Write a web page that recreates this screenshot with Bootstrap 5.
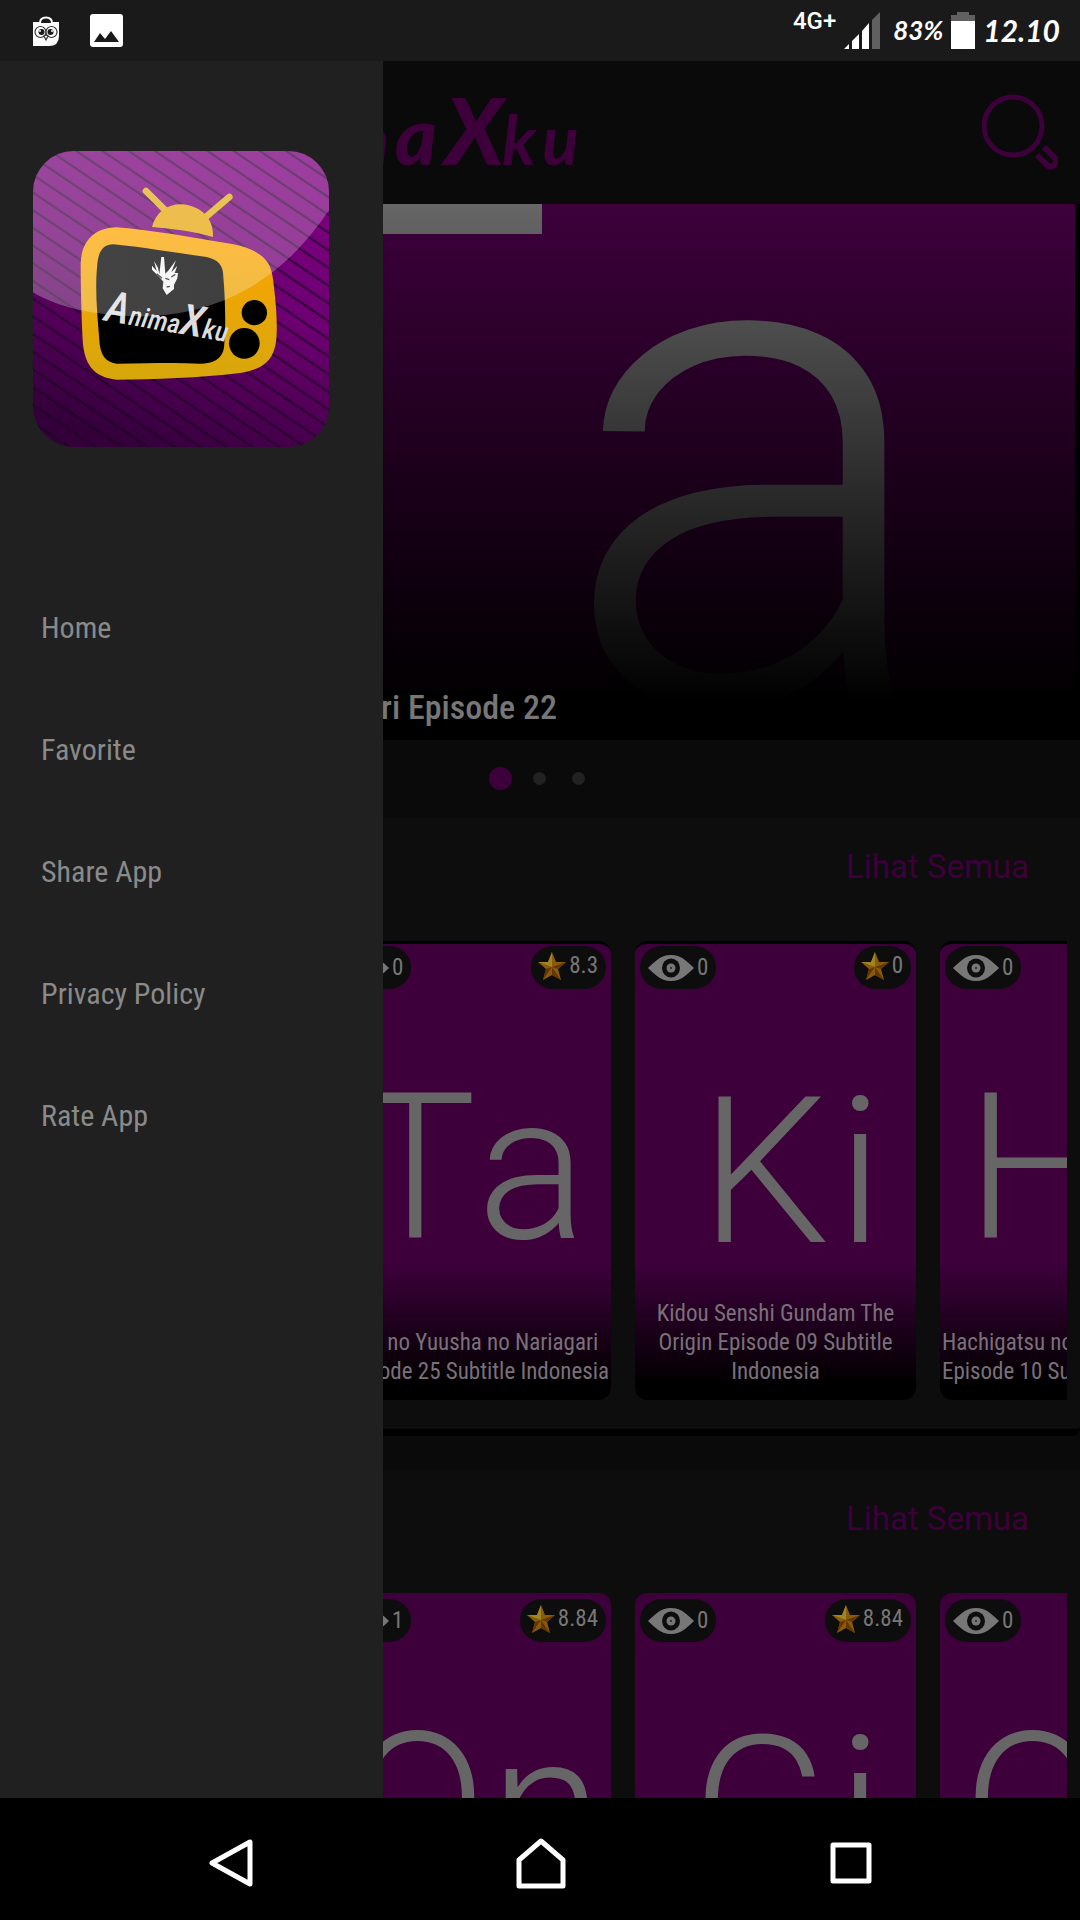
<!DOCTYPE html>
<html lang="id">
<head>
<meta charset="utf-8">
<meta name="viewport" content="width=device-width, initial-scale=1">
<title>AnimaXku</title>
<link href="https://cdn.jsdelivr.net/npm/bootstrap@5.3.0/dist/css/bootstrap.min.css" rel="stylesheet">
<style>
:root{--plum:#3d003b;--ink:#0a0a0a;--panel:#0d0d0d;--drawer:#202020;--narrow:"Roboto Condensed","Liberation Sans Narrow",Roboto,sans-serif}
body{background:var(--ink);font-family:Roboto,sans-serif;color:#666}
svg{display:block}
.status-bar{height:61px;background:#1a1a1a;color:#fff;padding:0 20px 0 33px}
.status-icons{gap:31px}
.net{font-size:24px;line-height:24px;font-weight:500;margin-bottom:20px}
.signal{margin-right:12px}
.hand{font-family:Lato,sans-serif;font-style:italic;font-weight:700}
.pct{font-size:26px}
.clock{font-size:30px}
.stage{min-height:0}
.drawer{width:383px;background:var(--drawer);padding:90px 33px 0;z-index:5}
.app-logo{width:296px;height:296px;margin-bottom:119px}
.drawer .nav-link{height:122px;padding:0 8px;font-family:var(--narrow);font-size:30px;color:#8a8a8a}
.top-bar{height:143px;padding-right:22px}
.wordmark{width:240px;height:143px;margin-left:340px}
.wordmark text{font-family:Lato,sans-serif;font-style:italic}
.app-logo text{font-family:var(--narrow);font-style:italic}
.hero{height:536px;background:#000}
.hero-art{width:1075px;height:536px}
.hero-caption{width:557px;bottom:11px;font-family:var(--narrow);font-size:34px;line-height:44px;font-weight:500;color:#777;text-align:right}
.dots{height:78px;padding:0 0 2px 489px;gap:26px}
.dots span{width:13px;height:13px;background:#222}
.dots .now{width:23px;height:23px;background:var(--plum)}
.dots span:nth-child(2){margin-left:-5px}
.shelf{background:var(--panel)}
.shelf-first{border-bottom:7px solid #000;border-bottom-right-radius:8px;margin-bottom:34px}
.shelf-head{height:123px;padding:0 51px 26px 0}
.shelf-head a{font-size:33px;color:var(--plum)}
.shelf-row{padding-left:330px;margin-right:13px;gap:24px;padding-bottom:29px}
.poster{flex:0 0 281px;height:459px;border-radius:12px;background:var(--plum);overflow:hidden}
.shelf-first .poster{border-top:3px solid #000}
.art text,.hero-art text{font-family:Roboto,sans-serif;font-weight:300;fill:#666}
.art{width:281px;height:459px}
.pill{height:43px;border-radius:22px;background:#0d0d0d;font-family:var(--narrow);font-size:23px;line-height:43px;color:#777}
.pills{top:6px;left:5px;right:5px}
.shelf-first .pills{top:2px}
.seen{padding:0 8px;gap:3px}
.rate{padding:0 8px 4px 7px;gap:3px}
.poster-title{height:137px;padding:0 2px 14px;font-family:var(--narrow);font-size:23px;line-height:29px;color:#7a707a;background:linear-gradient(rgba(0,0,0,0),#000 88%)}
.soft-keys{height:122px;background:#000;padding:8px 74px 0 76px}
.soft-keys .btn{border:0;flex:1}
</style>
</head>
<body class="vh-100 overflow-hidden d-flex flex-column">
<svg width="0" height="0" class="position-absolute" aria-hidden="true">
  <defs>
    <symbol id="eye" viewBox="0 0 46 26"><path d="M0 13Q4 9 9 5Q15 0 23 0T37 5Q42 9 46 13Q42 17 37 21Q31 26 23 26T9 21Q4 17 0 13Z" fill="#777"/><ellipse cx="23" cy="13" rx="9" ry="9.500" fill="#0d0d0d"/><circle cx="23" cy="13" r="4.500" fill="#777"/><circle cx="23" cy="13" r="1" fill="#222"/></symbol>
    <symbol id="star" viewBox="0 0 28 28"><path d="M14 0l4 10 10 0-8 7 3 11-9-5-9 5 3-11-8-7 10 0z" fill="#8a5c0a"/><path d="M28 10l-14 5 6 2zM23 28l-9-13v8zM5 28l9-13-6 2zM0 10l14 5-4-5z" fill="#643604"/><path d="M14 0l-4 10 4 5zM0 10h10l4 5z" fill="#a08522"/></symbol>
    <linearGradient id="fade" x2="0" y2="1"><stop offset="0" stop-opacity="0"/><stop offset=".5" stop-opacity=".55"/><stop offset=".93"/></linearGradient>
  </defs>
</svg>

<header class="status-bar d-flex align-items-center justify-content-between flex-shrink-0">
  <div class="d-flex align-items-center status-icons">
    <svg width="26" height="30" viewBox="0 0 26 30"><path d="M0 6H26V20Q26 30 16 30H0Z" fill="#fff"/><path d="M7 7Q7 1.500 13 1.500T19 7" fill="#1a1a1a" stroke="#fff" stroke-width="2"/><g fill="#fff" stroke="#333" stroke-width="1.200"><circle cx="7.500" cy="16" r="5.500"/><circle cx="18.500" cy="16" r="5.500"/><path d="M11 20l2-1 2 1-2 4z"/></g><circle cx="8.500" cy="16" r="3" fill="#1a1a1a"/><circle cx="17.500" cy="16" r="3" fill="#1a1a1a"/><circle cx="7" cy="15" r="1" fill="#fff"/><circle cx="19" cy="15" r="1" fill="#fff"/></svg>
    <svg width="33" height="33" viewBox="0 0 33 33"><rect width="33" height="33" rx="3" fill="#fff"/><path d="M4 28l6-9 5 6 6-8 8 11z" fill="#1a1a1a"/></svg>
  </div>
  <div class="d-flex align-items-center">
    <span class="net me-2">4G+</span>
    <svg class="signal" width="37" height="37" viewBox="0 0 37 37"><path d="M0 37l5-5v5zM8 37V29l7-7v15zM18 37V19l7-8v26z" fill="#fff"/><path d="M28 37V8l8-8v37z" fill="#606060"/></svg>
    <span class="hand pct me-2">83%</span>
    <svg class="me-2" width="24" height="37" viewBox="0 0 24 37"><path d="M0 9V3H6V0H18V3H24V9Z" fill="#606060"/><path d="M0 9H24V37H0Z" fill="#fff"/></svg>
    <span class="hand clock">12.10</span>
  </div>
</header>

<div class="stage position-relative flex-grow-1 overflow-hidden">
  <aside class="drawer position-absolute top-0 start-0 h-100">
    <svg class="app-logo" viewBox="39 32 888 888" role="img" aria-label="AnimaXku">
      <defs>
        <linearGradient id="bg" x1=".7" y1="0" x2=".35" y2="1"><stop offset="0" stop-color="#7d0080"/><stop offset=".45" stop-color="#6d0072"/><stop offset="1" stop-color="#33003a"/></linearGradient>
        <pattern id="lines" width="60" height="44" patternUnits="userSpaceOnUse" patternTransform="rotate(34)"><path d="M0 20H60" stroke="#1d0024" stroke-opacity=".75" stroke-width="6"/></pattern>
        <linearGradient id="tv" x2="0" y2="1"><stop offset="0" stop-color="#ffa500"/><stop offset="1" stop-color="#d6a70c"/></linearGradient>
        <linearGradient id="gloss" x2="1"><stop offset="0" stop-color="#fff" stop-opacity=".27"/><stop offset="1" stop-color="#fff" stop-opacity=".24"/></linearGradient>
        <clipPath id="tile"><rect x="39" y="32" width="888" height="888" rx="122"/></clipPath>
      </defs>
      <g clip-path="url(#tile)">
        <path d="M39 32H927V920H39Z" fill="url(#bg)"/>
        <path d="M39 32H927V920H39Z" fill="url(#lines)"/>
        <path d="M378 152L440 214M628 170L560 228" stroke="#dfb018" stroke-width="20" stroke-linecap="round"/>
        <path d="M396 260C408 214 444 190 488 192C545 198 582 236 579 290C520 272 460 266 396 260Z" fill="#e8a810"/>
        <path d="M290 261C400 270 520 292 640 312C720 328 752 360 758 410C768 480 774 560 768 604C760 664 724 688 660 698C540 712 400 718 290 718C220 712 192 670 188 600C184 520 182 440 182 370C184 300 226 262 290 261Z" fill="url(#tv)"/>
        <path d="M280 312C380 322 480 340 560 350C596 358 610 376 610 410C616 480 618 560 612 622C606 656 580 670 540 670C460 666 380 670 290 670C254 666 240 640 238 600C232 520 224 450 232 370C236 330 252 312 280 312Z"/>
        <circle cx="703" cy="517" r="38"/><circle cx="673" cy="609" r="46"/>
        <path d="M424 350l8 0 4 50 10-10 22-30-14 36 18-20-8 22 10 0-2 16-10 20 0 12-22 18-12-20 2-20-12-14-22-22 0-12 14 16-8-30 12 20 4 20z" fill="#f4f4f4"/><path d="M436 414l12 4M454 410l12-8M440 440l10-2M410 400l16 14" stroke="#222" stroke-width="4"/>
        <text x="250" y="540" fill="#ddd" font-weight="500" font-size="82" transform="rotate(10 250 540)"><tspan font-size="130">A</tspan>nima<tspan font-size="130">X</tspan>ku</text>
        <path d="M39 32H927V210C800 400 620 525 360 528C220 526 110 500 39 456Z" fill="url(#gloss)"/>
      </g>
    </svg>
    <nav class="nav flex-column">
      <a class="nav-link d-flex align-items-center" href="#">Home</a>
      <a class="nav-link d-flex align-items-center" href="#">Favorite</a>
      <a class="nav-link d-flex align-items-center" href="#">Share App</a>
      <a class="nav-link d-flex align-items-center" href="#">Privacy Policy</a>
      <a class="nav-link d-flex align-items-center" href="#">Rate App</a>
    </nav>
  </aside>

  <main>
    <div class="top-bar d-flex align-items-center justify-content-between">
      <svg class="wordmark" viewBox="340 61 240 143" role="img" aria-label="AnimaXku"><text x="389" y="165" fill="#3d003b" font-weight="900" font-size="68"><tspan text-anchor="end">m</tspan><tspan x="395" font-size="80">a</tspan><tspan x="445" font-size="92">X</tspan><tspan x="502 542" font-weight="700">ku</tspan></text></svg>
      <button class="btn p-0 border-0" aria-label="Cari"><svg width="76" height="80" viewBox="0 0 76 80" fill="none" stroke="#3d003b" stroke-width="5"><circle cx="31" cy="33" r="29"/><path d="M55 62L66 73Q70 75 73 71T72 64L62 54" stroke-width="6"/></svg></button>
    </div>

    <section class="hero position-relative overflow-hidden">
      <svg class="hero-art" viewBox="0 204 1075 536"><path d="M0 204H1075V740H0Z" fill="#3d003b"/><text x="134 559" y="704" font-size="713">Ta</text><path d="M0 204H1075V740H0Z" fill="url(#fade)"/></svg>
      <div class="hero-caption position-absolute start-0">Nariagari Episode 22</div>
    </section>
    <div class="dots d-flex align-items-center"><span class="now rounded-circle"></span><span class="rounded-circle"></span><span class="rounded-circle"></span></div>

    <section class="shelf shelf-first">
      <div class="shelf-head d-flex align-items-center justify-content-end"><a class="text-decoration-none" href="#">Lihat Semua</a></div>
      <div class="shelf-row d-flex overflow-hidden">
        <article class="poster position-relative">
          <svg class="art" viewBox="330 944 281 459"><text x="354 477" y="1238" font-size="205">Ta</text></svg>
          <div class="pills position-absolute d-flex justify-content-between"><span class="pill seen d-flex align-items-center"><svg width="46" height="26"><use href="#eye"/></svg>0</span><span class="pill rate d-flex align-items-center"><svg width="28" height="28"><use href="#star"/></svg>8.3</span></div>
          <div class="poster-title position-absolute bottom-0 start-0 w-100 d-flex flex-column justify-content-end text-center"><span class="text-nowrap">Tate no Yuusha no Nariagari</span><span class="text-nowrap align-self-end">Episode 25 Subtitle Indonesia</span></div>
        </article>
        <article class="poster position-relative">
          <svg class="art" viewBox="635 944 281 459"><text x="700 837" y="1242" font-size="205">Ki</text></svg>
          <div class="pills position-absolute d-flex justify-content-between"><span class="pill seen d-flex align-items-center"><svg width="46" height="26"><use href="#eye"/></svg>0</span><span class="pill rate d-flex align-items-center"><svg width="28" height="28"><use href="#star"/></svg>0</span></div>
          <div class="poster-title position-absolute bottom-0 start-0 w-100 d-flex flex-column justify-content-end text-center"><span>Kidou Senshi Gundam The</span><span>Origin Episode 09 Subtitle</span><span>Indonesia</span></div>
        </article>
        <article class="poster position-relative">
          <svg class="art" viewBox="940 944 281 459"><text x="966" y="1238" font-size="205">H</text></svg>
          <div class="pills position-absolute d-flex"><span class="pill seen d-flex align-items-center"><svg width="46" height="26"><use href="#eye"/></svg>0</span></div>
          <div class="poster-title position-absolute bottom-0 start-0 w-100 d-flex flex-column justify-content-end text-nowrap"><span>Hachigatsu no</span><span>Episode 10 Subtitle</span></div>
        </article>
      </div>
    </section>

    <section class="shelf">
      <div class="shelf-head d-flex align-items-center justify-content-end"><a class="text-decoration-none" href="#">Lihat Semua</a></div>
      <div class="shelf-row d-flex overflow-hidden">
        <article class="poster position-relative">
          <svg class="art" viewBox="330 1593 281 459"><text x="348 490" y="1877" font-size="205">On</text></svg>
          <div class="pills position-absolute d-flex justify-content-between"><span class="pill seen d-flex align-items-center"><svg width="46" height="26"><use href="#eye"/></svg>1</span><span class="pill rate d-flex align-items-center"><svg width="28" height="28"><use href="#star"/></svg>8.84</span></div>
        </article>
        <article class="poster position-relative">
          <svg class="art" viewBox="635 1593 281 459"><text x="691 837" y="1881" font-size="205">Gi</text></svg>
          <div class="pills position-absolute d-flex justify-content-between"><span class="pill seen d-flex align-items-center"><svg width="46" height="26"><use href="#eye"/></svg>0</span><span class="pill rate d-flex align-items-center"><svg width="28" height="28"><use href="#star"/></svg>8.84</span></div>
        </article>
        <article class="poster position-relative">
          <svg class="art" viewBox="940 1593 281 459"><text x="963" y="1877" font-size="205">O</text></svg>
          <div class="pills position-absolute d-flex"><span class="pill seen d-flex align-items-center"><svg width="46" height="26"><use href="#eye"/></svg>0</span></div>
        </article>
      </div>
    </section>
  </main>
</div>

<footer class="soft-keys d-flex align-items-center flex-shrink-0">
  <button class="btn d-flex justify-content-center" aria-label="Kembali"><svg width="44" height="50" viewBox="0 0 44 50" fill="none" stroke="#fff" stroke-width="5" stroke-linejoin="round"><path d="M41 4V46L3 25Z"/></svg></button>
  <button class="btn d-flex justify-content-center" aria-label="Beranda"><svg width="50" height="52" viewBox="0 0 50 52" fill="none" stroke="#fff" stroke-width="5" stroke-linejoin="round"><path d="M3 23L25 4L47 23V49H3Z"/></svg></button>
  <button class="btn d-flex justify-content-center" aria-label="Aplikasi terbaru"><svg width="42" height="42" viewBox="0 0 42 42" fill="none" stroke="#fff" stroke-width="5" stroke-linejoin="round"><path d="M3 3H39V39H3Z"/></svg></button>
</footer>
<script src="https://cdn.jsdelivr.net/npm/bootstrap@5.3.0/dist/js/bootstrap.bundle.min.js"></script>
</body>
</html>
